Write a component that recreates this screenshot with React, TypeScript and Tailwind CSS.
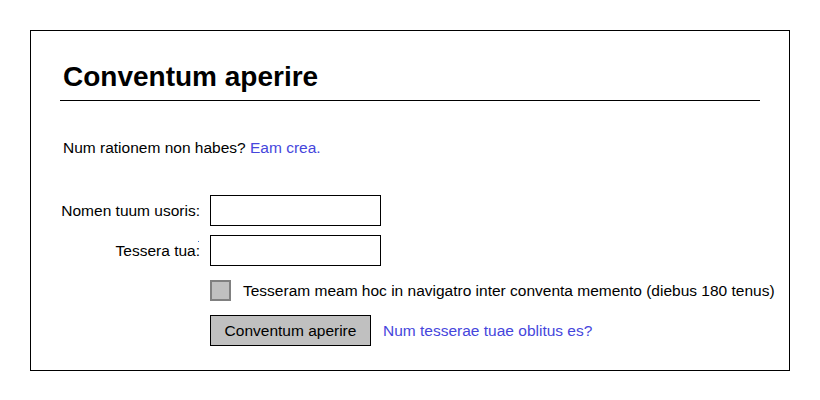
import React from "react";

export default function App() {
  return (
    <div className="bg-white w-[820px] h-[400px] p-[30px] font-['Liberation_Sans',Arial,sans-serif] text-black">
      <div className="border border-black h-[341px] px-[29px] pt-[31px]">
        <h1 className="text-[28px] font-bold leading-[30px] pl-[3px] pb-[8px] border-b border-black">
          Conventum aperire
        </h1>
        <p className="text-[15.5px] leading-[18px] pl-[3px] mt-[38px]">
          Num rationem non habes? <a className="text-[#4646dc]" href="#">Eam crea.</a>
        </p>
        <div className="mt-[38px] grid grid-cols-[140px_auto] gap-x-[10px] text-[15.5px] items-center">
          <label className="text-right whitespace-nowrap">Nomen tuum usoris:</label>
          <input className="w-[171px] h-[31px] border border-black bg-white" type="text" />
          <label className="relative text-right mt-[9px] whitespace-nowrap">
            Tessera tua:
            <span className="absolute right-[1px] top-[2px] w-px h-px bg-[#3a7bd5]" />
          </label>
          <input className="w-[171px] h-[31px] border border-black bg-white mt-[9px]" type="password" />
          <div />
          <div className="flex items-center gap-[12px] mt-[14px]">
            <span className="w-[21px] h-[21px] bg-[#c0c0c0] border-2 border-[#808080] shrink-0" />
            <span className="leading-[18px] whitespace-nowrap">
              Tesseram meam hoc in navigatro inter conventa memento (diebus 180 tenus)
            </span>
          </div>
          <div />
          <div className="flex items-center gap-[12px] mt-[14px]">
            <button className="w-[161px] h-[31px] bg-[#c0c0c0] border border-black text-[15.5px]">
              Conventum aperire
            </button>
            <a className="text-[#4646dc]" href="#">Num tesserae tuae oblitus es?</a>
          </div>
        </div>
      </div>
    </div>
  );
}
